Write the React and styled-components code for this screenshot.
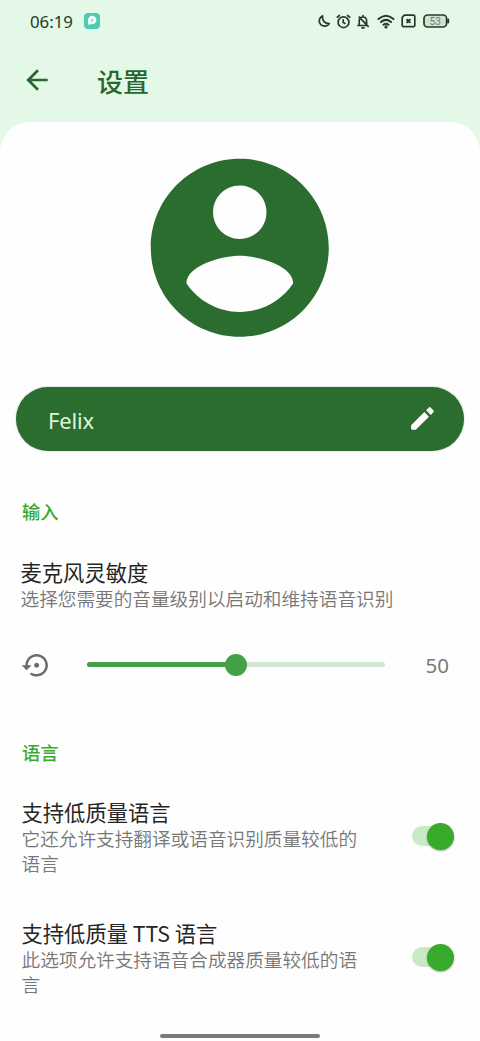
import React from 'react';
import styled, { createGlobalStyle } from 'styled-components';

const GlobalStyle = createGlobalStyle`
  *, *::before, *::after { box-sizing: border-box; }
  body {
    margin: 0;
    background: #e3f8e6;
    font-family: Roboto, "Noto Sans CJK SC", sans-serif;
  }
  svg { display: block; flex: none; }
`;

const Screen = styled.div`
  width: 480px;
  height: 1041px;
  display: flex;
  flex-direction: column;
  overflow: hidden;
  background: #e3f8e6;
`;

const StatusBar = styled.header`
  height: 42px;
  padding: 0 30px;
  display: flex;
  align-items: center;
  color: #26382b;
`;

const Clock = styled.span`
  width: 53px;
  padding-top: 1px;
  font: 400 16.8px/20px "Noto Sans", sans-serif;
  white-space: nowrap;
`;

const StatusIcons = styled.div`
  margin-left: auto;
  display: flex;
  align-items: center;
`;

const StatusIcon = styled.svg`
  margin-left: ${(p) => p.$gap}px;
  fill: none;
  stroke: currentColor;
  stroke-width: 1.7;
  stroke-linecap: round;
  stroke-linejoin: round;
`;

const AppBar = styled.div`
  height: 80px;
  padding: 0 24px 4px 21px;
  display: flex;
  align-items: center;
  gap: 44px;
  color: #28672d;
`;

const AppTitle = styled.h1`
  margin: 0;
  padding-top: 6px;
  font-size: 26px;
  font-weight: 500;
  line-height: 36px;
`;

const Panel = styled.main`
  flex: 1;
  display: flex;
  flex-direction: column;
  padding: 19px 16px 0;
  border-radius: 30px 30px 0 0;
  background: #fefefe;
`;

const Avatar = styled.svg`
  align-self: center;
  fill: #2b6c2f;
`;

const NameField = styled.div`
  height: 64px;
  margin-top: 32px;
  padding: 0 26px 0 32px;
  display: flex;
  align-items: center;
  justify-content: space-between;
  border-radius: 32px;
  background: #2b6c2f;
  box-shadow: 0 0 2px rgba(30, 70, 30, 0.35);
  color: #dcf5dd;
`;

const NameText = styled.span`
  font: 400 22px/30px "Noto Sans", sans-serif;
  letter-spacing: -0.2px;
  padding-top: 2px;
`;

const SectionTitle = styled.h2`
  margin: ${(p) => p.$top}px 6px 0;
  font-size: 18.3px;
  font-weight: 500;
  line-height: 24px;
  color: #38ab2d;
`;

const Setting = styled.section`
  margin-top: ${(p) => p.$top}px;
  padding: 0 10px 0 ${(p) => p.$inset}px;
  display: flex;
  align-items: center;
  justify-content: space-between;
`;

const SettingText = styled.div`
  width: ${(p) => p.$width}px;
`;

const SettingTitle = styled.h3`
  margin: 0 0 2px;
  font-family: "Noto Sans CJK SC", sans-serif;
  font-size: 21.3px;
  font-weight: 400;
  line-height: 28px;
  color: #252525;
`;

const SettingHint = styled.p`
  margin: 0;
  font-size: 18.65px;
  font-weight: 350;
  line-height: 25px;
  color: #777;
`;

const SliderRow = styled.div`
  height: 32px;
  margin-top: 36px;
  padding: 0 15px 0 4px;
  display: flex;
  align-items: center;
`;

const Track = styled.div`
  width: 298px;
  height: 5px;
  margin-left: 35px;
  display: flex;
  align-items: center;
  border-radius: 3px;
  background: #d2e7d2;
`;

const TrackFill = styled.div`
  height: 5px;
  border-radius: 3px;
  background: #43a047;
`;

const Thumb = styled.div`
  flex: none;
  width: 22px;
  height: 22px;
  margin-left: -11px;
  border-radius: 50%;
  background: #43a047;
`;

const SliderValue = styled.span`
  margin-left: auto;
  font: 400 20.5px/26px "Noto Sans", sans-serif;
  color: #797979;
`;

const Switch = styled.div`
  width: 42px;
  height: 20px;
  margin-bottom: 3px;
  display: flex;
  align-items: center;
  justify-content: flex-end;
  border-radius: 10px;
  background: #c8eac5;
`;

const SwitchKnob = styled.div`
  flex: none;
  width: 27px;
  height: 27px;
  border-radius: 50%;
  background: #38aa2c;
  box-shadow: 0 1px 2px rgba(0, 0, 0, 0.35);
`;

const HomeIndicator = styled.div`
  align-self: center;
  width: 160px;
  height: 4px;
  margin: auto 0 3px;
  border-radius: 2px;
  background: #7b7b7b;
`;

function StatusGlyphs() {
  return (
    <StatusIcons>
      <StatusIcon $gap={0} width="13" height="14" viewBox="0 0 13 14">
        <path d="M4.6 1.8C3.8 6.2 6.6 9.7 11.3 9.6C9.6 12.6 5.2 13 2.8 10.6C.2 8 .9 3.6 4.6 1.8Z" />
      </StatusIcon>
      <StatusIcon $gap={5} width="15" height="15" viewBox="0 0 15 15">
        <circle cx="7.5" cy="8.2" r="5.4" />
        <path d="M1.3 3.2L3.4 1.5M13.7 3.2L11.6 1.5M7.2 5.8V8.6L9 9.6" />
      </StatusIcon>
      <StatusIcon $gap={5} width="14" height="15" viewBox="0 0 14 15">
        <path d="M2 11.5H11.5M3.2 11.2V7C3.2 4.2 4.6 3 7 3S10.6 4.4 10.6 7V10M7 1.5V3M3.2 3.2L12.2 12.4M6 13.8H8" />
      </StatusIcon>
      <StatusIcon $gap={7} width="18" height="15" viewBox="0 0 18 15">
        <path d="M1.5 5Q9-1.5 16.5 5M4 8Q9 3.7 14 8M6.5 10.8Q9 8.8 11.5 10.8" strokeWidth="2" />
        <circle cx="9" cy="12.9" r=".7" fill="currentColor" />
      </StatusIcon>
      <StatusIcon $gap={6} width="15" height="14" viewBox="0 0 15 14">
        <path d="M3.4 1.2H12.4Q13.8 1.2 13.8 2.6V11.2Q13.8 12.6 12.4 12.6H2.6Q1.2 12.6 1.2 11.2V3.4Z" />
        <path d="M6.2 5.7L8.8 8.3M8.8 5.7L6.2 8.3" strokeWidth="2" />
      </StatusIcon>
      <StatusIcon $gap={7} width="27" height="14" viewBox="0 0 27 14">
        <rect x="1" y="1" width="22.6" height="12" rx="3.5" fill="#cfe3d2" />
        <path d="M25.2 5.5V8.5" strokeWidth="2" />
        <text x="12.2" y="10.6" textAnchor="middle" fontFamily="Roboto, sans-serif" fontSize="10" fill="#6b806f" stroke="none">53</text>
      </StatusIcon>
    </StatusIcons>
  );
}

function ToggleSetting({ top, title, hint }) {
  return (
    <Setting $top={top} $inset={5.5}>
      <SettingText $width={338}>
        <SettingTitle>{title}</SettingTitle>
        <SettingHint>{hint}</SettingHint>
      </SettingText>
      <Switch role="switch" aria-checked="true">
        <SwitchKnob />
      </Switch>
    </Setting>
  );
}

export default function App() {
  const level = 50;
  return (
    <>
      <GlobalStyle />
      <Screen>
        <StatusBar>
          <Clock>06:19</Clock>
          <svg width="18" height="18" viewBox="0 0 18 18">
            <rect x="1" y="1" width="16" height="16" rx="4" fill="#50c9b5" />
            <path d="M5 13V8.2A4.2 4.2 0 1 1 9.2 12.2H7Z" fill="#eefcf7" />
            <path d="M8.2 6.4L11 8.2L8.2 10Z" fill="#8adbcc" />
          </svg>
          <StatusGlyphs />
        </StatusBar>
        <AppBar>
          <svg width="32" height="32" viewBox="0 0 24 24" fill="currentColor">
            <path d="M20 11H7.83l5.59-5.59L12 4l-8 8 8 8 1.41-1.41L7.83 13H20v-2z" />
          </svg>
          <AppTitle>设置</AppTitle>
        </AppBar>
        <Panel>
          <Avatar width="213.6" height="213.6" viewBox="0 0 24 24">
            <path d="M12 2C6.48 2 2 6.48 2 12s4.48 10 10 10 10-4.48 10-10S17.52 2 12 2zm0 3c1.66 0 3 1.34 3 3s-1.34 3-3 3-3-1.34-3-3 1.34-3 3-3zm0 14.2c-2.5 0-4.71-1.28-6-3.22.03-1.99 4-3.08 6-3.08 1.99 0 5.97 1.09 6 3.08-1.29 1.94-3.5 3.22-6 3.22z" />
          </Avatar>
          <NameField>
            <NameText>Felix</NameText>
            <svg width="31" height="31" viewBox="0 0 24 24" fill="#fff">
              <path d="M3.2 17.2V20Q3.2 20.8 4 20.8H6.8L17 10.6 13.4 7ZM20.4 7.2a1.1 1.1 0 0 0 0-1.6L18.4 3.6a1.1 1.1 0 0 0-1.6 0L14.8 5.6 18.4 9.2Z" />
            </svg>
          </NameField>
          <SectionTitle $top={50}>输入</SectionTitle>
          <Setting $top={33} $inset={4.5}>
            <SettingText $width={400}>
              <SettingTitle>麦克风灵敏度</SettingTitle>
              <SettingHint>选择您需要的音量级别以启动和维持语音识别</SettingHint>
            </SettingText>
          </Setting>
          <SliderRow>
            <svg width="32" height="32" viewBox="0 0 24 24" fill="#6c6c6c">
              <path d="M14 12c0-1.1-.9-2-2-2s-2 .9-2 2 .9 2 2 2 2-.9 2-2zm-2-9c-4.97 0-9 4.03-9 9H0l4 4 4-4H5c0-3.87 3.13-7 7-7s7 3.13 7 7-3.13 7-7 7c-1.51 0-2.91-.49-4.06-1.3l-1.42 1.44C8.04 20.3 9.94 21 12 21c4.97 0 9-4.03 9-9s-4.03-9-9-9z" transform="translate(1.2 .9) scale(.94)" />
            </svg>
            <Track>
              <TrackFill style={{ width: `${level}%` }} />
              <Thumb />
            </Track>
            <SliderValue>{level}</SliderValue>
          </SliderRow>
          <SectionTitle $top={61}>语言</SectionTitle>
          <ToggleSetting top={32} title="支持低质量语言" hint="它还允许支持翻译或语音识别质量较低的语言" />
          <ToggleSetting top={41} title="支持低质量 TTS 语言" hint="此选项允许支持语音合成器质量较低的语言" />
          <HomeIndicator />
        </Panel>
      </Screen>
    </>
  );
}
